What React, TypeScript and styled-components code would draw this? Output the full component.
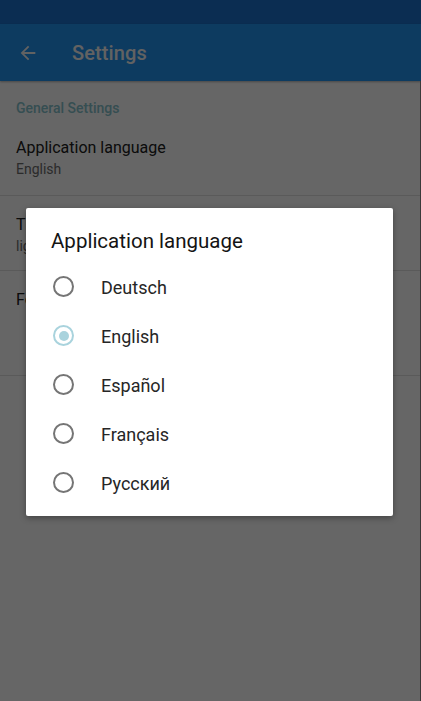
import React from "react";
import styled, { createGlobalStyle } from "styled-components";

const Global = createGlobalStyle`
  html, body { margin: 0; padding: 0; background: #fff; }
  body { font-family: Roboto, "Noto Sans", sans-serif; width: 421px; height: 701px; overflow: hidden; }
  #root { width: 421px; height: 701px; }
`;

const Screen = styled.div`
  position: relative;
  width: 421px;
  height: 701px;
  background: #fff;
  display: flex;
  flex-direction: column;
  overflow: hidden;
`;

const StatusBar = styled.div`
  height: 24px;
  background: #1c71cd;
  flex: none;
`;

const AppBar = styled.div`
  height: 57px;
  background: #2193f0;
  display: flex;
  align-items: center;
  padding-left: 17px;
  gap: 33px;
  flex: none;
  box-shadow: 0 1px 2px rgba(0,0,0,0.3);
`;

const AppTitle = styled.div`
  color: #f4f4f4;
  font-size: 20px;
  font-weight: 500;
  letter-spacing: 0.1px;
`;

const Content = styled.div`
  flex: 1;
  display: flex;
  flex-direction: column;
`;

const SectionHeader = styled.div`
  padding: 19px 16px 0;
  height: 20px;
  font-size: 14px;
  font-weight: 500;
  color: #86c3cc;
`;

const Pref = styled.div<{ $h: number }>`
  height: ${(p) => p.$h}px;
  box-sizing: border-box;
  padding: 0 16px;
  display: flex;
  flex-direction: column;
  justify-content: flex-start;
  border-bottom: 1px solid #e2e2e2;
`;

const PrefTitle = styled.div<{ $top: number }>`
  margin-top: ${(p) => p.$top}px;
  font-size: 16px;
  color: #202020;
  line-height: 20px;
`;

const PrefSummary = styled.div`
  font-size: 14px;
  color: #6c6c6c;
  line-height: 18px;
  margin-top: 2px;
`;

const EdgeStrip = styled.div`
  position: absolute;
  right: 0;
  top: 81px;
  width: 1px;
  bottom: 0;
  background: #3a3a3a;
`;

const Scrim = styled.div`
  position: absolute;
  inset: 0;
  background: rgba(0, 0, 0, 0.6);
`;

const Dialog = styled.div`
  position: absolute;
  left: 26px;
  top: 208px;
  width: 367px;
  height: 308px;
  background: #fff;
  border-radius: 2px;
  box-shadow: 0 2px 6px rgba(0,0,0,0.35);
  box-sizing: border-box;
  padding: 20px 0 0;
  display: flex;
  flex-direction: column;
`;

const DialogTitle = styled.div`
  padding-left: 25px;
  font-size: 20.5px;
  font-weight: 400;
  color: #141414;
  line-height: 26px;
  margin-bottom: 8px;
`;

const Option = styled.div`
  height: 49px;
  display: flex;
  align-items: center;
  padding-left: 27px;
  gap: 27px;
`;

const Radio = styled.div<{ $checked?: boolean }>`
  width: 21px;
  height: 21px;
  box-sizing: border-box;
  border-radius: 50%;
  border: 2px solid ${(p) => (p.$checked ? "#a9d3dd" : "#757575")};
  display: flex;
  align-items: center;
  justify-content: center;
  &::after {
    content: "";
    width: 10px;
    height: 10px;
    border-radius: 50%;
    background: ${(p) => (p.$checked ? "#a9d3dd" : "transparent")};
  }
`;

const OptionLabel = styled.div`
  font-size: 18px;
  color: #262626;
  margin-top: 1px;
`;

const languages = ["Deutsch", "English", "Español", "Français", "Русский"];

export default function App() {
  return (
    <>
      <Global />
      <Screen>
        <StatusBar />
        <AppBar>
          <svg width="22" height="22" viewBox="0 0 24 24" fill="none">
            <path d="M20 11H7.83l5.59-5.59L12 4l-8 8 8 8 1.41-1.41L7.83 13H20v-2z" fill="#f4f4f4" />
          </svg>
          <AppTitle>Settings</AppTitle>
        </AppBar>
        <Content>
          <SectionHeader>General Settings</SectionHeader>
          <Pref $h={76}>
            <PrefTitle $top={18}>Application language</PrefTitle>
            <PrefSummary>English</PrefSummary>
          </Pref>
          <Pref $h={75}>
            <PrefTitle $top={19}>Theme</PrefTitle>
            <PrefSummary>light</PrefSummary>
          </Pref>
          <Pref $h={105}>
            <PrefTitle $top={19}>Font size</PrefTitle>
          </Pref>
        </Content>
        <Scrim />
        <EdgeStrip />
        <Dialog>
          <DialogTitle>Application language</DialogTitle>
          {languages.map((l) => (
            <Option key={l}>
              <Radio $checked={l === "English"} />
              <OptionLabel>{l}</OptionLabel>
            </Option>
          ))}
        </Dialog>
      </Screen>
    </>
  );
}
